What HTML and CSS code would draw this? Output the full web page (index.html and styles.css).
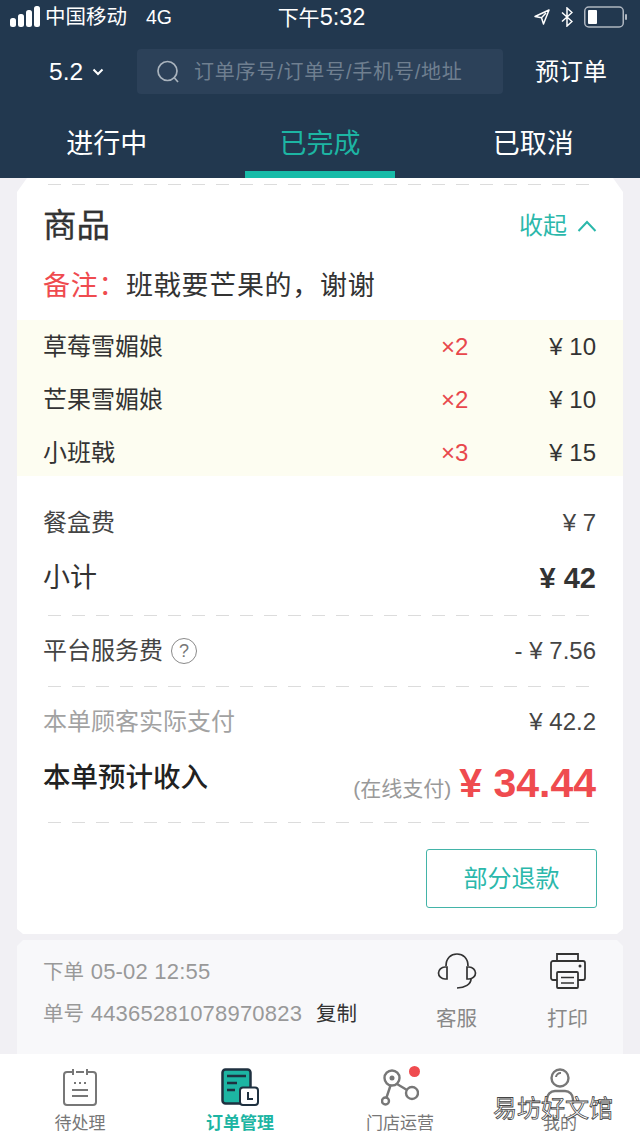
FILE: index.html
```html
<!DOCTYPE html>
<html lang="zh">
<head>
<meta charset="utf-8">
<title>订单管理</title>
<link rel="stylesheet" href="styles.css">
</head>
<body>
<div class="page">
  <header class="top">
    <div class="status">
      <div class="status-left">
        <svg class="signal" width="30" height="24" viewBox="0 0 30 24"><rect x="0" y="13" width="6" height="9" rx="2.5" fill="#fff"/><rect x="8" y="9" width="6" height="13" rx="2.5" fill="#fff"/><rect x="16" y="5" width="6" height="17" rx="2.5" fill="#fff"/><rect x="24" y="1" width="6" height="21" rx="2.5" fill="#fff"/></svg>
        <span class="carrier">中国移动</span>
        <span class="net">4G</span>
      </div>
      <div class="clock">下午<span class="clock-num">5:32</span></div>
      <div class="status-right">
        <svg width="16" height="16" viewBox="0 0 16 16"><path d="M15 1 1 7.5l6.5 1.2L9.5 15z M12 4 7.5 8.7" fill="none" stroke="#fff" stroke-width="1.5" stroke-linejoin="round"/></svg>
        <svg width="12" height="20" viewBox="0 0 12 20"><path d="M1 5.5l10 9-5 4.5V1l5 4.5-10 9" fill="none" stroke="#fff" stroke-width="1.5"/></svg>
        <svg width="44" height="22" viewBox="0 0 44 22"><rect x=".75" y="1" width="38.5" height="20" rx="4" fill="none" stroke="#aeb6c0" stroke-width="1.5"/><rect x="4" y="4" width="9" height="14" rx="1" fill="#fff"/><rect x="41" y="8" width="2" height="6" rx="1" fill="#aeb6c0"/></svg>
      </div>
    </div>
    <div class="search-row">
      <div class="date">5.2<svg width="12" height="8" viewBox="0 0 12 8"><path d="M1.500 1.500 6 6l4.500-4.500" fill="none" stroke="#fff" stroke-width="2"/></svg></div>
      <div class="search">
        <svg width="26" height="26" viewBox="0 0 26 26"><circle cx="12.500" cy="12" r="9.500" fill="none" stroke="#a9b3bd" stroke-width="1.700"/><path d="m19.500 19 3.500 4" stroke="#a9b3bd" stroke-width="1.700" fill="none"/></svg>
        <span>订单序号/订单号/手机号/地址</span>
      </div>
      <div class="preorder">预订单</div>
    </div>
    <nav class="tabs">
      <div class="tab">进行中</div>
      <div class="tab tab-on">已完成</div>
      <div class="tab">已取消</div>
    </nav>
  </header>

  <main class="body">
    <section class="card">
      <div class="dash dash-top"></div>
      <div class="card-head">
        <h2 class="title">商品</h2>
        <div class="fold">收起<svg width="20" height="12" viewBox="0 0 20 12"><path d="M1.500 11 10 2l8.500 9" fill="none" stroke="#2bb8ab" stroke-width="2"/></svg></div>
      </div>
      <p class="note"><span class="note-key">备注：</span>班戟要芒果的，谢谢</p>
      <div class="items">
        <div class="item"><span class="item-name">草莓雪媚娘</span><span class="item-qty">×2</span><span class="item-price">¥ 10</span></div>
        <div class="item"><span class="item-name">芒果雪媚娘</span><span class="item-qty">×2</span><span class="item-price">¥ 10</span></div>
        <div class="item"><span class="item-name">小班戟</span><span class="item-qty">×3</span><span class="item-price">¥ 15</span></div>
      </div>
      <div class="row row-box"><span>餐盒费</span><span>¥ 7</span></div>
      <div class="row row-sub"><span>小计</span><strong>¥ 42</strong></div>
      <div class="dash"></div>
      <div class="row row-fee">
        <span class="fee-label">平台服务费<i class="help">?</i></span><span>- ¥ 7.56</span>
      </div>
      <div class="dash"></div>
      <div class="row row-paid"><span class="muted">本单顾客实际支付</span><span>¥ 42.2</span></div>
      <div class="row row-income">
        <span class="income-label">本单预计收入</span>
        <span class="income-value"><small>(在线支付)</small><b>¥ 34.44</b></span>
      </div>
      <div class="dash"></div>
      <div class="actions"><button class="refund">部分退款</button></div>
    </section>

    <section class="info">
      <div class="info-text">
        <div>下单 <span class="num">05-02 12:55</span></div>
        <div class="info-no">单号 <span class="num">44365281078970823</span><span class="copy">复制</span></div>
      </div>
      <div class="info-act">
        <svg width="40" height="36" viewBox="0 0 40 36"><path d="M9 13C9 5 14 1 20 1s11 4 11 12" fill="none" stroke="#333" stroke-width="1.700"/><path d="M10 14v12H8a6.500 6 0 0 1 0-12zM30 14v12h2a6.500 6 0 0 0 0-12z" fill="none" stroke="#333" stroke-width="1.700"/><path d="M34 26c0 5-6 9-14 9" fill="none" stroke="#333" stroke-width="1.700"/></svg>
        <span>客服</span>
      </div>
      <div class="info-act">
        <svg width="36" height="36" viewBox="0 0 36 36"><path d="M7 8V1h21v7" fill="none" stroke="#333" stroke-width="1.800"/><path d="M7 27H3a2 2 0 0 1-2-2V10a2 2 0 0 1 2-2h30a2 2 0 0 1 2 2v15a2 2 0 0 1-2 2h-5" fill="none" stroke="#333" stroke-width="1.800"/><rect x="7" y="19" width="21" height="16" rx="1" fill="none" stroke="#333" stroke-width="1.800"/><path d="M11 24.500h13M11 30h13" stroke="#333" stroke-width="1.600"/><circle cx="30" cy="13" r="1.500" fill="#333"/></svg>
        <span>打印</span>
      </div>
    </section>
  </main>

  <footer class="bar">
    <div class="bar-item">
      <svg width="34" height="38" viewBox="0 0 34 38"><path d="M9 4H4a3 3 0 0 0-3 3v27a3 3 0 0 0 3 3h26a3 3 0 0 0 3-3V7a3 3 0 0 0-3-3h-5M13 4h8M10 1v6M24 1v6" fill="none" stroke="#777" stroke-width="2"/><path d="M11 15h2M16 15h2M21 15h2M9 22h16M9 28h16" stroke="#777" stroke-width="2"/></svg>
      <span>待处理</span>
    </div>
    <div class="bar-item bar-on">
      <svg width="38" height="38" viewBox="0 0 38 38"><rect x="1.500" y="1.500" width="28" height="34" rx="3" fill="#1db5a3" stroke="#1f3140" stroke-width="2.500"/><path d="M6 8h19M6 15h10M6 22h8" stroke="#1f3140" stroke-width="2.500"/><rect x="19" y="19.500" width="18" height="17.500" rx="3" fill="#fff" stroke="#1f3140" stroke-width="2"/><path d="M27 24v7h5" fill="none" stroke="#1f3140" stroke-width="2"/></svg>
      <span>订单管理</span>
    </div>
    <div class="bar-item">
      <span class="node-wrap">
        <svg width="38" height="38" viewBox="0 0 38 38"><circle cx="11" cy="10" r="7.500" fill="none" stroke="#777" stroke-width="2.400"/><circle cx="11" cy="10" r="2.500" fill="#777"/><circle cx="31" cy="25" r="6" fill="none" stroke="#777" stroke-width="2.400"/><circle cx="4.500" cy="33" r="3.500" fill="none" stroke="#777" stroke-width="2.400"/><path d="M16 16l10 6M9.500 17.500 5.500 29.500" stroke="#777" stroke-width="2.400" fill="none"/></svg>
        <i class="dot"></i>
      </span>
      <span>门店运营</span>
    </div>
    <div class="bar-item">
      <svg width="38" height="38" viewBox="0 0 38 38"><circle cx="19" cy="10" r="8.500" fill="none" stroke="#777" stroke-width="2.400"/><path d="M15 9a4.500 4.500 0 0 1 5-4" fill="none" stroke="#777" stroke-width="2"/><path d="M6 36v-5a8 8 0 0 1 8-8h10a8 8 0 0 1 8 8v5" fill="none" stroke="#777" stroke-width="2.400"/></svg>
      <span>我的</span>
    </div>
    <div class="mark">易坊好文馆</div>
  </footer>
</div>
</body>
</html>
```
FILE: styles.css
```css
* { box-sizing: border-box; }
html, body { margin: 0; padding: 0; }
body { font-family: "Liberation Sans", "Noto Sans CJK SC", sans-serif; color: #333; }
.page { width: 640px; height: 1138px; display: flex; flex-direction: column; background: #f1f0f4; overflow: hidden; }

.top { height: 178px; background: #22384f; color: #fff; flex: none; }
.status { height: 34px; padding: 0 12px 0 10px; display: grid; grid-template-columns: 1fr auto 1fr; align-items: center; }
.status-left { display: flex; align-items: center; font-size: 20.500px; line-height: 24px; }
.signal { margin-right: 5px; }
.net { margin-left: 19px; font-size: 19.500px; }
.clock { font-size: 21px; line-height: 24px; margin-left: 5px; }
.clock-num { font-size: 23.500px; }
.status-right { display: flex; justify-content: flex-end; align-items: center; gap: 11px; }

.search-row { display: flex; align-items: center; height: 45px; margin-top: 15px; }
.date { width: 137px; padding-left: 49px; font-size: 24.500px; line-height: 30px; display: flex; align-items: center; gap: 9px; }
.search { width: 366px; height: 45px; background: #2c4159; border-radius: 4px; display: flex; align-items: center; gap: 13px; padding-left: 18px; color: #6f7f90; font-size: 20px; line-height: 26px; letter-spacing: .8px; white-space: nowrap; }
.preorder { margin-left: 32px; font-size: 24px; line-height: 30px; }

.tabs { display: flex; margin-top: 26px; height: 58px; }
.tab { position: relative; flex: 1; font-size: 27px; line-height: 48px; text-align: center; }
.tab-on { color: #1db5a3; }
.tab-on::after { content: ""; position: absolute; left: 32px; bottom: 0; width: 150px; height: 7px; background: #17bba8; }

.body { flex: 1; }
.dash { height: 1px; margin: 0 33px 0 31px; background: repeating-linear-gradient(90deg, #dcdcdc 0 13px, transparent 13px 24px); }
.dash-top { position: absolute; top: 6px; left: 0; right: 0; }

.card { position: relative; margin: 0 17px; height: 756px; background: #fff; padding-top: 5px; clip-path: polygon(10px 0, calc(100% - 10px) 0, 100% 14px, 100% calc(100% - 5px), calc(100% - 6px) 100%, 6px 100%, 0 calc(100% - 5px), 0 14px); }
.card-head { display: flex; justify-content: space-between; align-items: center; padding: 0 26px; height: 85px; }
.title { margin: 0; font-size: 33.500px; line-height: 40px; font-weight: 400; color: #333; -webkit-text-stroke: .3px #333; }
.fold { display: flex; align-items: center; gap: 10px; font-size: 24px; line-height: 30px; color: #2bb8ab; }
.note { margin: 0; padding: 0 26px; font-size: 27px; letter-spacing: .7px; line-height: 36px; height: 52px; color: #333; }
.note-key { color: #ef4b4f; }

.items { background: #fdfdf1; height: 156px; }
.item { height: 53px; padding: 0 27px 0 26px; display: flex; align-items: center; font-size: 24px; line-height: 30px; color: #333; }
.item-name { flex: 1; }
.item-qty { width: 98px; color: #e8474c; }
.item-price { width: 57px; text-align: right; white-space: nowrap; }

.row { display: flex; justify-content: space-between; padding: 0 27px 0 26px; font-size: 24px; line-height: 30px; color: #444; }
.row-box { margin-top: 32px; }
.row-sub { margin-top: 25px; font-size: 27px; line-height: 30px; align-items: center; color: #333; }
.row-sub strong { font-size: 29px; font-weight: 700; line-height: 28px; }
.row-sub + .dash { margin-top: 22px; }
.row-fee { height: 70px; align-items: center; }
.fee-label { display: flex; align-items: center; gap: 8px; }
.help { width: 26px; height: 26px; border: 1px solid #8a8a8a; border-radius: 50%; font-style: normal; font-size: 18px; line-height: 24px; text-align: center; color: #777; }
.row-paid { margin-top: 20px; }
.muted { color: #a2a2a2; }
.row-income { margin-top: 23px; height: 62px; align-items: flex-start; }
.income-label { font-size: 27.500px; line-height: 36px; color: #222; font-weight: 500; }
.income-value { display: flex; align-items: flex-end; gap: 8px; white-space: nowrap; margin-top: 1px; }
.income-value small { font-size: 21px; line-height: 32px; color: #999; }
.income-value b { font-size: 41px; line-height: 44px; color: #ef4b4f; }
.actions { display: flex; justify-content: flex-end; padding: 26px 26px 0 0; }
.refund { width: 171px; height: 59px; background: #fff; border: 1.500px solid #43b4a8; border-radius: 3px; font: inherit; font-size: 24px; color: #2bb8ab; padding: 0 0 4px; }

.info { margin: 6px 17px 0; height: 114px; background: #f8f8fa; display: flex; padding-left: 26px; color: #999; font-size: 20.500px; line-height: 24px; clip-path: polygon(6px 0, calc(100% - 6px) 0, 100% 6px, 100% 100%, 0 100%, 0 6px); }
.info-text { flex: 1; padding-top: 20px; display: flex; flex-direction: column; gap: 18px; }
.info-no { white-space: nowrap; }
.num { font-size: 22px; margin-left: 1px; letter-spacing: .2px; }
.copy { margin-left: 14px; color: #333; }
.info-act { display: flex; flex-direction: column; align-items: center; width: 111px; padding-top: 13px; gap: 18px; color: #888; }

.bar { position: relative; flex: none; height: 84px; background: #fff; display: flex; }
.bar-item { flex: 1; display: flex; flex-direction: column; align-items: center; padding-top: 14px; font-size: 17px; line-height: 22px; color: #777; gap: 7px; }
.bar-on { color: #1db5a3; font-weight: 700; }
.node-wrap { position: relative; display: block; height: 38px; }
.node-wrap svg { display: block; }
.dot { position: absolute; top: -2px; right: -1px; width: 11px; height: 11px; border-radius: 50%; background: #ef4b4f; }
.mark { position: absolute; right: 27px; top: 41px; font-size: 24px; line-height: 28px; color: #fff; -webkit-text-stroke: .8px #444; }
```
